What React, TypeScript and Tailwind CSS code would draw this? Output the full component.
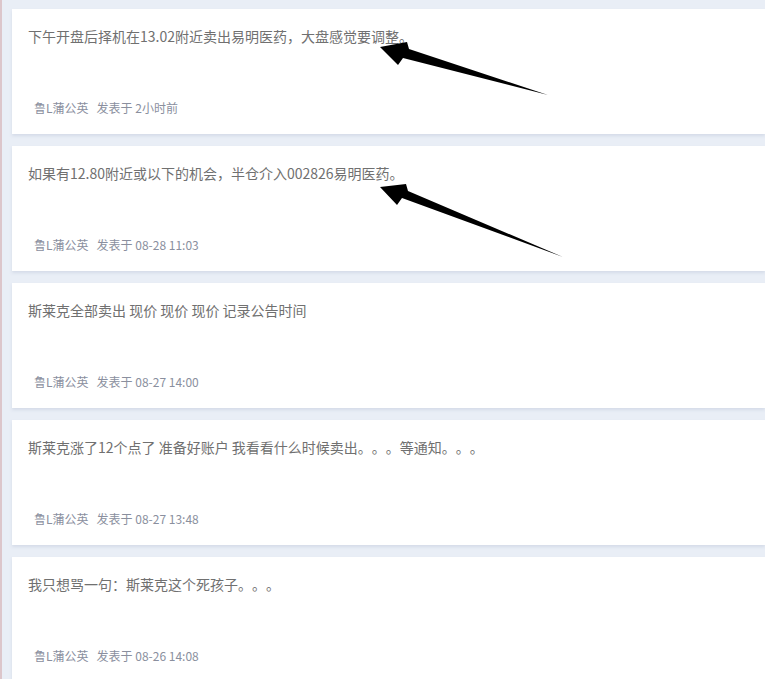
import React from "react";

const posts = [
  { text: "下午开盘后择机在13.02附近卖出易明医药，大盘感觉要调整。", time: "2小时前" },
  { text: "如果有12.80附近或以下的机会，半仓介入002826易明医药。", time: "08-28 11:03" },
  { text: "斯莱克全部卖出 现价 现价 现价 记录公告时间", time: "08-27 14:00" },
  { text: "斯莱克涨了12个点了 准备好账户 我看看什么时候卖出。。。等通知。。。", time: "08-27 13:48" },
  { text: "我只想骂一句：斯莱克这个死孩子。。。", time: "08-26 14:08" },
];

function PostCard({ text, time }: { text: string; time: string }) {
  return (
    <div className="bg-white h-[125px] pl-4 pt-[17px] flex flex-col shadow-[0_2px_3px_rgba(120,140,170,0.18)]">
      <p className="text-[14px] leading-[20px] text-[#707070] [text-spacing-trim:space-all]">{text}</p>
      <div className="mt-auto mb-[18px] pl-[6px] flex items-center text-[12px] leading-[16px] text-[#8a8f9e]">
        <span>鲁L蒲公英</span>
        <span className="ml-2">发表于 {time}</span>
      </div>
    </div>
  );
}

export default function App() {
  return (
    <div
      className="relative w-[765px] h-[679px] overflow-hidden bg-[#e9eef6] border-l-[2px] border-[#dcc6cb]"
      style={{ fontFamily: '"Noto Sans CJK SC", "Microsoft YaHei", sans-serif' }}
    >
      <div className="flex flex-col gap-[12px] pt-[9px] pl-[10px]">
        {posts.map((p, i) => (
          <PostCard key={i} text={p.text} time={p.time} />
        ))}
      </div>

      {/* annotation arrows */}
      <svg className="absolute left-0 top-0" width="765" height="679" viewBox="0 0 765 679">
        <polygon points="378,47 405,42 407,49 546,95 401,58 396,65" fill="#000" />
        <polygon points="378,187 404,184 406,191 561,257 400,198 395,205" fill="#000" />
      </svg>
    </div>
  );
}
